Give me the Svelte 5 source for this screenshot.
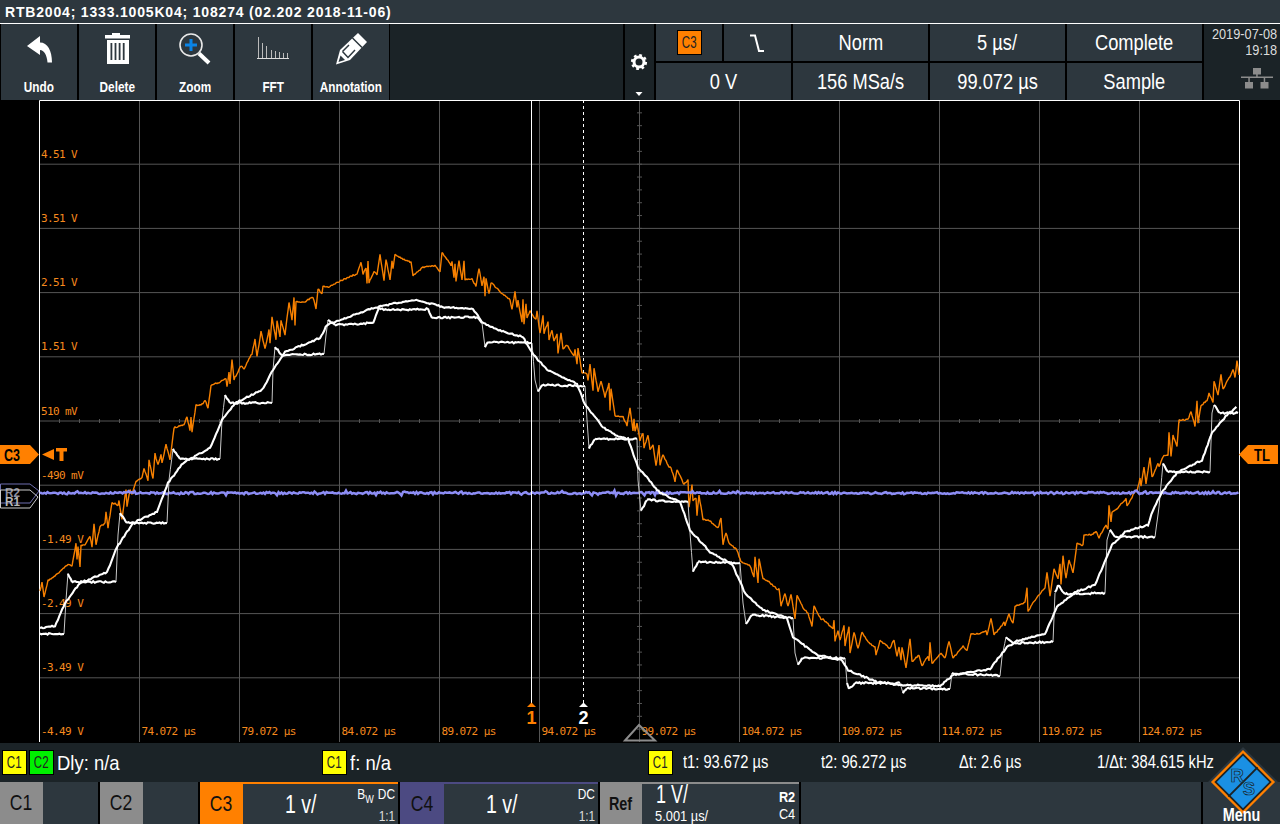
<script>
  const smooth = [[40,628],[55,626],[65,603],[80,583],[107,572],[117,547],[133,523],[157,512],[168,483],[183,463],[210,448],[222,420],[235,403],[262,390],[273,370],[285,352],[320,338],[327,325],[340,320],[373,308],[397,303],[418,300],[443,307],[473,309],[482,322],[497,330],[523,337],[532,353],[547,370],[577,384],[585,405],[603,427],[617,436],[628,439],[638,467],[660,493],[680,502],[690,530],[710,552],[732,564],[745,593],[763,610],[787,618],[793,637],[817,655],[842,660],[848,670],[877,682],[900,685],[940,686],[953,675],[990,669],[1007,647],[1017,641],[1045,634],[1057,607],[1075,592],[1095,585],[1112,545],[1125,532],[1148,525],[1153,510],[1162,492],[1177,473],[1202,460],[1212,433],[1227,415],[1238,406]];
  const stair = [[40,634],[64,634],[66,600],[68,573],[72,582],[116,582],[118,535],[120,513],[127,523],[167,523],[169,480],[173,449],[180,459],[220,459],[222,420],[225,395],[230,403],[272,403],[273,370],[275,347],[282,355],[324,354],[326,335],[328,320],[335,325],[373,323],[379,308],[387,310],[428,309],[432,318],[477,317],[482,323],[485,347],[488,342],[532,343],[535,380],[538,392],[542,385],[585,386],[587,420],[589,448],[595,439],[637,439],[638,480],[641,511],[647,500],[688,502],[690,533],[693,572],[698,562],[740,563],[743,603],[746,624],[752,615],[793,618],[795,653],[798,665],[802,658],[845,658],[847,683],[849,689],[855,683],[900,683],[903,693],[907,688],[950,689],[952,673],[1000,676],[1002,657],[1006,637],[1013,643],[1053,642],[1055,593],[1058,585],[1065,594],[1105,593],[1107,540],[1110,530],[1115,537],[1155,537],[1159,507],[1163,463],[1168,472],[1210,472],[1212,413],[1214,405],[1220,413],[1238,413]];

  let seed = 20190708;
  function rnd() {
    seed = (seed + 0x6d2b79f5) | 0;
    let t = Math.imul(seed ^ (seed >>> 15), 1 | seed);
    t = (t + Math.imul(t ^ (t >>> 7), 61 | t)) ^ t;
    return ((t ^ (t >>> 14)) >>> 0) / 4294967296;
  }
  function jitter(points, amount) {
    let d = '';
    for (let i = 0; i < points.length - 1; i++) {
      const [x0, y0] = points[i], [x1, y1] = points[i + 1];
      const n = Math.max(1, Math.round((x1 - x0) / 1.5));
      for (let k = 0; k < n; k++) {
        const t = k / n;
        const x = x0 + (x1 - x0) * t;
        const y = y0 + (y1 - y0) * t + (rnd() - 0.5) * amount;
        d += (d ? 'L' : 'M') + x.toFixed(1) + ' ' + y.toFixed(1);
      }
    }
    return d;
  }
  const smoothPath = jitter(smooth, 1.5);
  const holds = [], rises = [];
  for (let i = 0; i < stair.length - 1; i++) {
    const a = stair[i], b = stair[i + 1];
    const steep = Math.abs(b[1] - a[1]) / Math.max(1, b[0] - a[0]) > 3;
    (steep ? rises : holds).push(jitter([a, b], steep ? 0 : 1.7) + 'L' + b[0] + ' ' + b[1]);
  }
  const holdPath = holds.join('');
  const risePath = rises.join('');

  let orangePath = '';
  {
    let prev = 0, next = 0, start = 40, end = 40, sign = 1;
    for (let x = 40; x <= 1239; x += 1) {
      if (x >= end) {
        prev = next;
        start = x;
        const plateau = rnd() < 0.18;
        end = x + (plateau ? 5 + Math.floor(rnd() * 6) : 1 + Math.floor(rnd() * 4));
        sign = -sign;
        next = plateau ? prev * 0.3 : sign * (2 + rnd() * 13);
      }
      const f = (x - start) / (end - start);
      const y = 458 - 195 * Math.cos((2 * Math.PI * (x - 410)) / 1000) + prev + (next - prev) * f + (rnd() - 0.5) * 1.5;
      orangePath += (orangePath ? 'L' : 'M') + x + ' ' + y.toFixed(1);
    }
  }
  let bluePath = '';
  for (let x = 40; x <= 1239; x += 1.5) {
    bluePath += (bluePath ? 'L' : 'M') + x + ' ' + (493 + (rnd() - 0.5) * (rnd() < 0.08 ? 5 : 2)).toFixed(1);
  }

  const hLines = Array.from({ length: 9 }, (_, i) => 100 + 64.2 * (i + 1));
  const vLines = Array.from({ length: 11 }, (_, i) => 139.5 + 100 * i);
  const hTicks = Array.from({ length: 60 }, (_, i) => 59.5 + 20 * i);
  const vTicks = Array.from({ length: 49 }, (_, i) => 100 + 12.84 * (i + 1));
  const yLabels = [['4.51 V',158],['3.51 V',222],['2.51 V',286],['1.51 V',350],['510 mV',415],['-490 mV',479],['-1.49 V',543],['-2.49 V',607],['-3.49 V',671],['-4.49 V',735]];
  const tLabels = ['74.072','79.072','84.072','89.072','94.072','99.072','104.072','109.072','114.072','119.072','124.072'];
</script>

<div class="page">
  <div class="title">RTB2004; 1333.1005K04; 108274 (02.202 2018-11-06)</div>

  <div class="toolbar">
    <div class="tool">
      <svg width="76" height="50" viewBox="1 24 76 50"><path class="w" d="M27 46 40 36v6.500c7.500 0 12 8 12 20h-4.500c-.5-7.500-3.500-12.500-7.500-12.500V55Z"/></svg>
      <span>Undo</span>
    </div>
    <div class="tool">
      <svg width="76" height="50" viewBox="79 24 76 50"><path class="w" d="M112 33h8v2h10v3.500h-25V35h7ZM107 40h22v24h-22Z"/><path class="k" d="M110.500 43h1.800v17h-1.800ZM114.600 43h1.800v17h-1.800ZM118.700 43h1.800v17h-1.800ZM122.800 43h1.800v17h-1.800Z"/></svg>
      <span>Delete</span>
    </div>
    <div class="tool">
      <svg width="76" height="50" viewBox="157 24 76 50"><circle class="ring" cx="191" cy="45" r="11"/><path class="handle" d="M199 53.500 209 63"/><path class="plus" d="M191 39v12M185 45h12"/></svg>
      <span>Zoom</span>
    </div>
    <div class="tool">
      <svg width="76" height="50" viewBox="235 24 76 50"><path class="fft" d="M258.500 37v22M262.500 43v16M266.500 46v13M271.500 50v9M275.500 51v8M279.500 52v7M283.500 53v6M287.500 53v6"/><path class="axis" d="M257 58.500h32"/></svg>
      <span>FFT</span>
    </div>
    <div class="tool">
      <svg width="76" height="50" viewBox="313 24 76 50"><path class="w" d="M336 64.500 340 50 358 33 367 42 350 60Z"/><path class="pen" d="M352.500 38 362 47.500M342.500 51.500 348 57.500 355 50M342.500 51.500 349 45"/><path class="k" d="M338.500 62 340.500 55.500 345 60Z"/></svg>
      <span>Annotation</span>
    </div>
    <div class="spacer"></div>
    <div class="gear">
      <svg width="29" height="76" viewBox="625 24 29 76"><circle class="teeth" cx="639" cy="62" r="6.800"/><circle class="cog" cx="639" cy="62" r="5"/><path class="w" d="M635.500 92h7L639 96Z"/></svg>
    </div>
    <div class="cells">
      <div class="cell"><span class="chip"><span class="c">C3</span></span></div>
      <div class="cell"><svg width="20" height="24" viewBox="0 0 20 24"><path class="slope" d="M2 4.500H7L11 20H16"/></svg></div>
      <div class="cell"><span class="t">Norm</span></div>
      <div class="cell"><span class="t">5 µs/</span></div>
      <div class="cell"><span class="t">Complete</span></div>
      <div class="cell wide"><span class="t">0 V</span></div>
      <div class="cell"><span class="t">156 MSa/s</span></div>
      <div class="cell"><span class="t">99.072 µs</span></div>
      <div class="cell"><span class="t">Sample</span></div>
    </div>
    <div class="status">
      <div class="date"><span>2019-07-08</span><span>19:18</span></div>
      <svg width="32" height="21" viewBox="1241 70 32 21"><path class="net" d="M1253 70h8v6.500h-8ZM1245 84h8v6.500h-8ZM1260.500 84h8v6.500h-8ZM1241 78.500h32v1.500h-32ZM1256.200 76h1.500v3h-1.500ZM1248.300 79h1.500v6h-1.500ZM1263.700 79h1.500v6h-1.500Z"/></svg>
    </div>
  </div>

  <svg class="plot" width="1280" height="643" viewBox="0 100 1280 643">
    {#each hLines as y}<path class="grid" d="M40 {y}H1239" />{/each}
    {#each vLines as x}<path class="grid" d="M{x} 100V742" />{/each}
    {#each hTicks as x}<path class="grid" d="M{x} 419V423" />{/each}
    {#each vTicks as y}<path class="grid" d="M637 {y}H642" />{/each}
    <path class="border" d="M39.500 742V100.500H1239.500V742" />

    {#each yLabels as [t, y]}<text class="lbl" x="41" {y}>{t}</text>{/each}
    {#each tLabels as t, i}<text class="lbl" x={141.500 + 100 * i} y="735">{t} µs</text>{/each}

    <path class="orange" d={orangePath} />
    <path class="blue" d={bluePath} />
    <path class="rise" d={risePath} />
    <path class="hold" d={holdPath} />
    <path class="hold" d={smoothPath} />

    <path class="cur" d="M531.500 100V703" />
    <path class="cur dots" d="M583.500 100V703" />
    <path class="o" d="M527 707 531.500 702.500 536 707Z" />
    <text class="curnum o" x="531.500" y="724">1</text>
    <path class="w" d="M579 707 583.500 702.500 588 707Z" />
    <text class="curnum w" x="583.500" y="724">2</text>
    <path class="tri" d="M625 740.500 639 725 655 740.500Z" />

    <path class="o" d="M0 445H30L39 454.500 30 464H0Z" />
    <text class="mark" x="4" y="460.500" textLength="16" lengthAdjust="spacingAndGlyphs">C3</text>
    <path class="o" d="M42 454.500 54 449V460ZM56 448H67V451.500H63.500V461H59.500V451.500H56Z" />
    <path class="ref2" d="M.5 484H30L39 491 30 503H.5Z" />
    <text class="rt r2" x="5" y="497" textLength="15" lengthAdjust="spacingAndGlyphs">R2</text>
    <path class="ref1" d="M.5 490H30L38 497 30 508H.5Z" />
    <text class="rt r1" x="5" y="506" textLength="15" lengthAdjust="spacingAndGlyphs">R1</text>
    <path class="o" d="M1239 454.500 1248 445H1278V464H1248Z" />
    <text class="mark" x="1254" y="460.500" textLength="16" lengthAdjust="spacingAndGlyphs">TL</text>
  </svg>

  <div class="measure">
    <div class="m-left"><span class="mini y"><span class="c">C1</span></span><span class="mini g"><span class="c">C2</span></span><span class="mt">Dly: n/a</span></div>
    <div class="m-mid"><span class="mini y"><span class="c">C1</span></span><span class="mt">f: n/a</span></div>
    <div class="m-right">
      <span class="mini y"><span class="c">C1</span></span>
      <span class="mr col t1">t1: 93.672 µs</span>
      <span class="mr col">t2: 96.272 µs</span>
      <span class="mr col">Δt: 2.6 µs</span>
      <span class="mr">1/Δt: 384.615 kHz</span>
    </div>
  </div>

  <div class="channels">
    <div class="ch"><div class="tag"><span>C1</span></div><div class="fill"></div></div>
    <div class="ch"><div class="tag"><span>C2</span></div><div class="fill"></div></div>
    <div class="ch on3">
      <div class="tag"><span>C3</span></div>
      <div class="fill"><span class="scale">1 v/</span><span class="cpl"><i>B<sub>W</sub></i> DC</span><span class="ratio">1:1</span></div>
    </div>
    <div class="ch on4">
      <div class="tag"><span>C4</span></div>
      <div class="fill"><span class="scale">1 v/</span><span class="cpl">DC</span><span class="ratio">1:1</span></div>
    </div>
    <div class="ch ref">
      <div class="tag"><span>Ref</span></div>
      <div class="fill">
        <span class="ref-a">1 V/</span><span class="ref-b">5.001 µs/</span>
        <span class="ref-c">R2</span><span class="ref-d">C4</span>
      </div>
    </div>
    <div class="rest"></div>
    <div class="menu"><span>Menu</span></div>
  </div>

  <svg class="logo" width="70" height="70" viewBox="0 0 72 72" role="img" aria-label="R&S">
    <path class="l-out" d="M36 0 72 36 36 72 0 36Z" />
    <path class="l-or" d="M36 3 69 36 36 69 3 36Z" />
    <path class="l-gap" d="M36 6.500 65.500 36 36 65.500 6.500 36Z" />
    <path class="l-blue" d="M36 9 63 36 36 63 9 36Z" />
    <path class="l-dark" d="M21 51 51 21" />
    <text class="l-t" x="30" y="36">R</text>
    <text class="l-t" x="42" y="49">S</text>
  </svg>
</div>

<style>
  :global(body) { margin: 0; background: #000; }
  .page {
    position: relative;
    width: 1280px;
    height: 824px;
    overflow: hidden;
    background: #000;
    display: flex;
    flex-direction: column;
    color: #fff;
    font-family: "Liberation Sans", sans-serif;
  }
  .title {
    height: 23px;
    box-sizing: border-box;
    background: #2d373e;
    font: 700 14px/24px "Liberation Sans", sans-serif;
    letter-spacing: .82px;
    padding-left: 5px;
    white-space: nowrap;
    flex: none;
  }
  .toolbar {
    height: 76px;
    margin-top: 1px;
    box-shadow: 0 -1px 0 #fff;
    display: flex;
    flex: none;
    background: #000;
    padding-left: 1px;
    gap: 2px;
  }
  .tool {
    width: 76px;
    background: #2d373e;
    display: flex;
    flex-direction: column;
    align-items: center;
    font-size: 15.500px;
    font-weight: 700;
    line-height: 16px;
  }
  .tool svg { display: block; margin-bottom: 5px; }
  .tool span { display: inline-block; transform: scaleX(.76); white-space: nowrap; }
  .spacer { width: 233px; margin-left: -1px; background: #1b2327; }
  .gear { width: 29px; background: #1b2327; }
  .gear svg { display: block; }
  .cells {
    width: 547px;
    display: grid;
    grid-template-columns: 66px 67px 135px 135px 135px;
    grid-template-rows: 37px 37px;
    gap: 2px;
    align-content: start;
  }
  .cell {
    background: #2d373e;
    display: flex;
    align-items: center;
    justify-content: center;
    font-size: 22px;
  }
  .t { display: inline-block; transform: scaleX(.83); white-space: nowrap; }
  .c { display: inline-block; transform: scaleX(.72); font-size: 16px; }
  .wide { grid-column: span 2; }
  .chip {
    width: 23px;
    height: 23px;
    background: #ff8000;
    border: 1px solid #000;
    color: #222;
    display: flex;
    align-items: center;
    justify-content: center;
  }
  .status {
    flex: 1;
    min-width: 0;
    margin-left: -1px;
    background: #1b2327;
    display: flex;
    flex-direction: column;
    align-items: flex-end;
    padding-right: 3px;
  }
  .date {
    font-size: 14.500px;
    line-height: 16px;
    color: #ddd;
    padding-top: 2px;
    display: flex;
    flex-direction: column;
    align-items: flex-end;
    white-space: nowrap;
    transform: scaleX(.88);
    transform-origin: right;
  }
  .status svg { margin: 10px 4px 0 0; flex: none; }
  .net { fill: #8c8c8c; }
  .plot { display: block; flex: none; }
  .w { fill: #fff; }
  .k { fill: #2d373e; }
  .o { fill: #ff8000; }
  .ring { fill: none; stroke: #e8e8e8; stroke-width: 1.600; }
  .handle { fill: none; stroke: #fff; stroke-width: 4; }
  .plus { fill: none; stroke: #0a84e6; stroke-width: 3; }
  .fft { fill: none; stroke: #bbb; stroke-width: 1; }
  .axis { fill: none; stroke: #ddd; stroke-width: 1; }
  .pen { fill: none; stroke: #2d373e; stroke-width: 1.500; }
  .teeth { fill: none; stroke: #fff; stroke-width: 2.600; stroke-dasharray: 2.700 2.640; }
  .cog { fill: none; stroke: #fff; stroke-width: 3; }
  .slope { fill: none; stroke: #fff; stroke-width: 2; }
  .grid { fill: none; stroke: #555; stroke-width: 1; }
  .border { fill: none; stroke: #fff; stroke-width: 1; }
  .lbl { fill: #f78a1e; font: 11px "DejaVu Sans Mono", monospace; letter-spacing: -.6px; }
  .orange { fill: none; stroke: #f78000; stroke-width: 1.400; stroke-linejoin: bevel; }
  .blue { fill: none; stroke: #8d8df5; stroke-width: 2.500; }
  .hold { fill: none; stroke: #fff; stroke-width: 2.100; }
  .rise { fill: none; stroke: #c8c8c8; stroke-width: 1; }
  .cur { fill: none; stroke: #fff; stroke-width: 1; }
  .dots { stroke-dasharray: 3 3; }
  .curnum { font: 700 18px "Liberation Sans", sans-serif; text-anchor: middle; }
  .tri { fill: none; stroke: #8c8c8c; stroke-width: 2; }
  .mark { fill: #000; font: 700 17px "Liberation Sans", sans-serif; }
  .ref2 { fill: none; stroke: #6f6fb0; stroke-width: 1; }
  .ref1 { fill: none; stroke: #ccc; stroke-width: 1; }
  .rt { font: 700 13px "Liberation Sans", sans-serif; }
  .r2 { fill: #8f8f9f; }
  .r1 { fill: #b8b8b8; }

  .measure {
    height: 39px;
    flex: none;
    display: flex;
    background: #1b2327;
    align-items: center;
  }
  .m-left { width: 322px; box-sizing: border-box; padding-left: 2px; display: flex; align-items: center; gap: 2px; }
  .m-mid { width: 326px; display: flex; align-items: center; gap: 3px; }
  .m-right { flex: 1; display: flex; align-items: center; }
  .mini {
    width: 23px;
    height: 23px;
    border: 1px solid #000;
    color: #222;
    display: flex;
    align-items: center;
    justify-content: center;
    flex: none;
  }
  .y { background: #ffff00; }
  .g { background: #00f000; }
  .mt, .mr { display: inline-block; white-space: nowrap; transform-origin: left; }
  .mt { font-size: 21px; transform: scaleX(.88); }
  .m-left .mt { margin-left: 1px; }
  .mr { font-size: 17.500px; transform: scaleX(.84); }
  .col { width: 138px; flex: none; }
  .t1 { margin-left: 10px; }

  .channels { height: 42px; flex: none; display: flex; background: #000; position: relative; gap: 2px; }
  .ch { display: flex; width: 98px; }
  .tag {
    width: 43px;
    background: #8c8c8c;
    color: #111;
    font-size: 22px;
    display: flex;
    align-items: center;
    justify-content: center;
    flex: none;
  }
  .tag span { display: inline-block; transform: scaleX(.8); }
  .fill { flex: 1; background: #2d373e; position: relative; }
  .on3, .on4 { width: 198px; }
  .on3 { border-top: 2px solid #ff8000; height: 40px; }
  .on4 { border-top: 2px solid #4c4a82; height: 40px; }
  .on3 .tag { background: #ff8000; }
  .on4 .tag { background: #4c4a82; width: 44px; }
  .scale { position: absolute; left: 42px; top: 6px; font-size: 25px; line-height: 28px; transform: scaleX(.78); transform-origin: left; white-space: nowrap; }
  .cpl { position: absolute; right: 3px; top: 2px; font-size: 14.500px; line-height: 16px; transform: scaleX(.82); transform-origin: right; white-space: nowrap; }
  .cpl i { font-style: normal; margin-right: 1px; }
  .cpl sub { font-size: 11px; line-height: 0; }
  .ratio { position: absolute; right: 3px; bottom: 1px; font-size: 14.500px; line-height: 14px; color: #ddd; transform: scaleX(.82); transform-origin: right; }
  .ref { width: 199px; border-top: 2px solid #8c8c8c; height: 40px; }
  .ref .tag { width: 42px; font-weight: 700; font-size: 18px; }
  .ref-a { position: absolute; left: 14px; top: -3px; font-size: 25px; line-height: 26px; transform: scaleX(.72); transform-origin: left; white-space: nowrap; }
  .ref-b { position: absolute; left: 13px; bottom: 0; font-size: 15.500px; line-height: 17px; transform: scaleX(.83); transform-origin: left; white-space: nowrap; }
  .ref-c { position: absolute; right: 4px; top: 5px; font-size: 15px; line-height: 15px; font-weight: 700; transform: scaleX(.85); transform-origin: right; }
  .ref-d { position: absolute; right: 4px; top: 22px; font-size: 15px; line-height: 15px; transform: scaleX(.85); transform-origin: right; }
  .rest { width: 400px; background: #2d373e; }
  .menu {
    flex: 1;
    background: #2d373e;
    font-size: 18px;
    font-weight: 700;
    text-align: center;
    line-height: 17px;
    padding-top: 25px;
    box-sizing: border-box;
  }
  .menu span { display: inline-block; position: relative; z-index: 2; transform: scaleX(.8); }
  .logo { position: absolute; left: 1208px; top: 747px; }
  .l-out { fill: #2d373e; }
  .l-or { fill: #ff8000; }
  .l-gap { fill: #1b2327; }
  .l-blue { fill: #1a90e4; }
  .l-dark { fill: none; stroke: #1b2327; stroke-width: 2; }
  .l-t { fill: #1a90e4; stroke: #1b2327; stroke-width: .7; font: 700 19px "Liberation Sans", sans-serif; text-anchor: middle; }
</style>
